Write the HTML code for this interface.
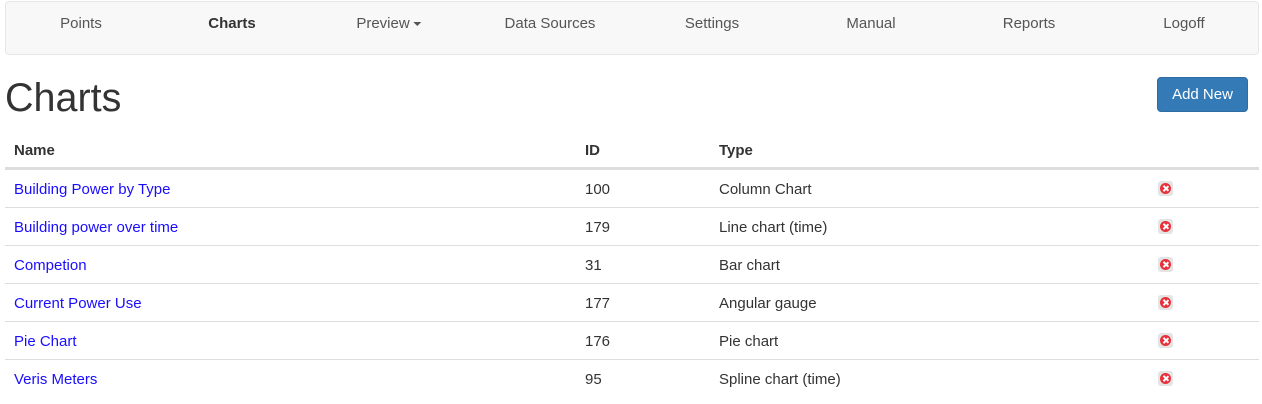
<!DOCTYPE html>
<html><head><style>
body{margin:0;width:1262px;height:404px;background:#fff;font-family:"Liberation Sans",sans-serif;font-size:15px;color:#333;position:relative;overflow:hidden}
.nav{position:absolute;left:5px;top:1px;width:1252px;height:52px;background:#f8f8f8;border:1px solid #e7e7e7;border-radius:4px}
.nav span{position:absolute;top:13px;transform:translateX(-50%);color:#555;font-size:15px;white-space:nowrap}
.caret{display:inline-block;width:0;height:0;border-left:4px solid transparent;border-right:4px solid transparent;border-top:4px solid #555;vertical-align:middle;margin-left:4px}
h1{position:absolute;left:5px;top:76px;margin:0;font-weight:normal;font-size:39.5px;line-height:44px;color:#333}
.btn{position:absolute;left:1157px;top:77px;width:91px;height:35px;background:#337ab7;border:1px solid #2e6da4;border-radius:4px;box-sizing:border-box;color:#fff;font-size:15px;text-align:center;line-height:34px}
.row{position:absolute;left:5px;width:1254px;height:38px;border-top:1px solid #ddd}
.row div{position:absolute;top:11px;white-space:nowrap}
.c1{left:9px}.c2{left:580px}.c3{left:714px}
.row a{color:#1a0dff;text-decoration:none}
.hd{border-top:none;border-bottom:2px solid #ddd;height:36px}
.hd div{font-weight:bold;top:11px}
.x{position:absolute;left:1153px;top:11px;width:15px;height:15px;border-radius:3px;background:#e4e4e4}
.x i{position:absolute;left:2px;top:2px;width:11px;height:11px;border-radius:50%;background:#e8303a}
.x i:before,.x i:after{content:"";position:absolute;left:5px;top:2px;width:1.5px;height:7px;background:#fff;transform:rotate(45deg)}
.x i:after{transform:rotate(-45deg)}
</style></head><body>
<div class="nav">
<span style="left:75px">Points</span>
<span style="left:226px;font-weight:bold;color:#333">Charts</span>
<span style="left:383px">Preview<b class="caret"></b></span>
<span style="left:544px">Data Sources</span>
<span style="left:706px">Settings</span>
<span style="left:865px">Manual</span>
<span style="left:1023px">Reports</span>
<span style="left:1178px">Logoff</span>
</div>
<h1>Charts</h1>
<div class="btn">Add New</div>
<div class="row hd" style="top:131px"><div class="c1">Name</div><div class="c2">ID</div><div class="c3">Type</div></div>
<div class="row" style="top:169px"><div class="c1"><a>Building Power by Type</a></div><div class="c2">100</div><div class="c3">Column Chart</div><span class="x"><i></i></span></div>
<div class="row" style="top:207px"><div class="c1"><a>Building power over time</a></div><div class="c2">179</div><div class="c3">Line chart (time)</div><span class="x"><i></i></span></div>
<div class="row" style="top:245px"><div class="c1"><a>Competion</a></div><div class="c2">31</div><div class="c3">Bar chart</div><span class="x"><i></i></span></div>
<div class="row" style="top:283px"><div class="c1"><a>Current Power Use</a></div><div class="c2">177</div><div class="c3">Angular gauge</div><span class="x"><i></i></span></div>
<div class="row" style="top:321px"><div class="c1"><a>Pie Chart</a></div><div class="c2">176</div><div class="c3">Pie chart</div><span class="x"><i></i></span></div>
<div class="row" style="top:359px"><div class="c1"><a>Veris Meters</a></div><div class="c2">95</div><div class="c3">Spline chart (time)</div><span class="x"><i></i></span></div>
</body></html>
